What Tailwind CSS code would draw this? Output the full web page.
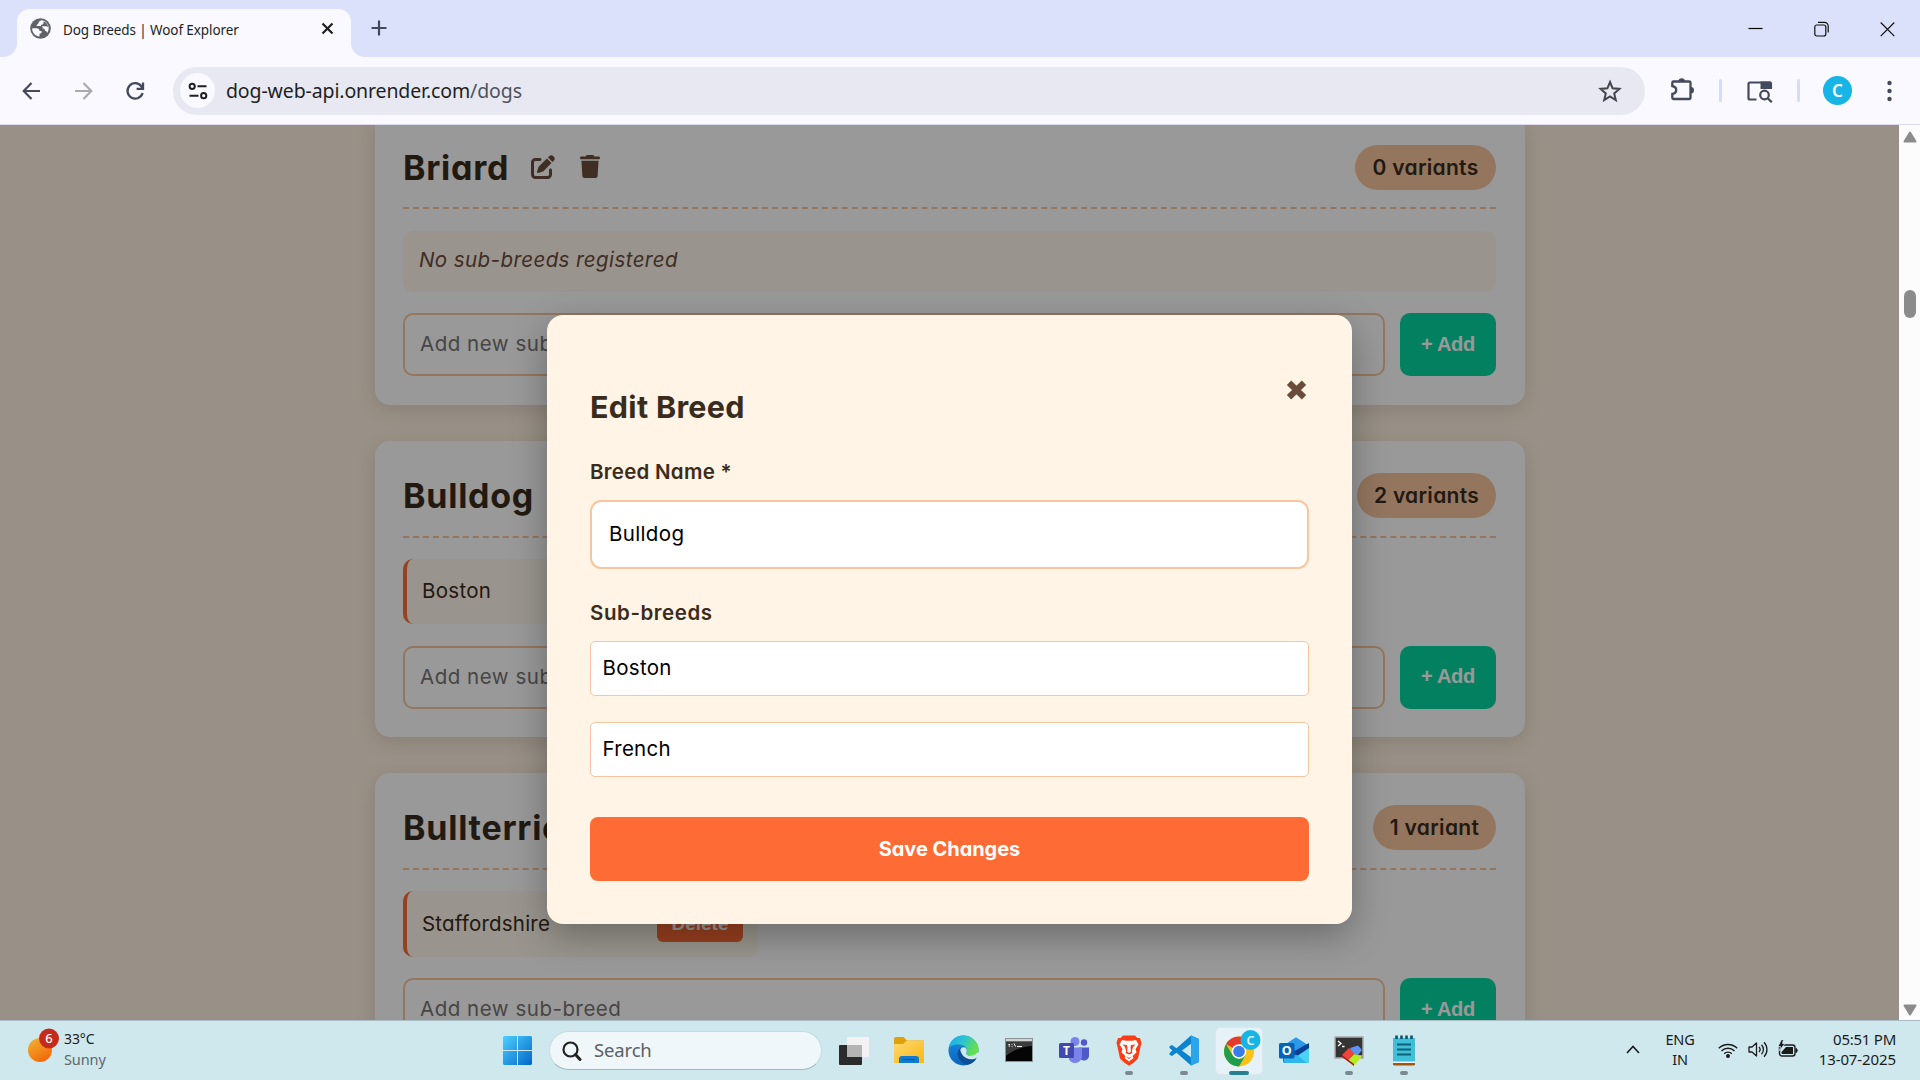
<!DOCTYPE html>
<html lang="en">
<head>
<meta charset="utf-8">
<title>Dog Breeds | Woof Explorer</title>
<script src="https://cdn.jsdelivr.net/npm/@tailwindcss/browser@4"></script>
</head>
<body class="w-[1920px] h-[1080px] overflow-hidden flex flex-col bg-[#faf9ff] font-['Noto_Sans',sans-serif] text-[#1f1f1f]">

<!-- Tab strip -->
<header class="h-[57px] shrink-0 bg-[#dce1fb] flex items-end">
  <svg class="ml-[3px] w-[14px] h-[14px] shrink-0" viewBox="0 0 14 14"><path d="M14 0V14H0C8 14 14 8 14 0Z" fill="#faf9ff"/></svg>
  <div class="w-[334px] h-[48px] bg-[#faf9ff] rounded-t-[13px] flex items-center pb-[9px] pl-[13px] pr-[17px]">
    <svg class="w-[21px] h-[21px]" viewBox="0 0 21 21"><circle cx="10.5" cy="10.5" r="10.3" fill="#5f6368"/><path d="M2.200 10.200H6.500C8.500 10.200 9.500 11.500 9.500 13H11.500C12 14.500 11 15.800 9.500 15.800V18.600C5.500 18.200 2 14.800 2.200 10.200Z M11.500 2.300C10 3.200 8.500 3.200 8.500 5C8.500 6.500 6.500 6 6.500 8H11.500C12.500 8 12.800 9 12.500 10.500C14 10.500 15 11 15 12.800C16.500 12.800 17 14 17.200 15C20.500 10.500 18.500 3 11.500 2.300Z" fill="#faf9ff"/><path d="M13.500 3.500V5.200C13.500 6.500 12 6.700 11 6.700V8.300H16.500L18.300 9C18 6.500 16 4.300 13.500 3.500Z" fill="#5f6368"/></svg>
    <span class="ml-3 mt-[2px] flex-1 text-[13.5px] tracking-[-0.1px] leading-5 whitespace-nowrap">Dog Breeds | Woof Explorer</span>
    <svg class="w-[13px] h-[13px]" viewBox="0 0 13 13"><path d="M1.500 1.500l10 10m0-10l-10 10" stroke="#1f1f1f" stroke-width="2.200"/></svg>
  </div>
  <svg class="w-[14px] h-[14px] shrink-0" viewBox="0 0 14 14"><path d="M0 0V14H14C6 14 0 8 0 0Z" fill="#faf9ff"/></svg>
  <svg class="ml-[6px] mb-[21px] w-[16px] h-[16px]" viewBox="0 0 16 16"><path d="M8 .5v15M.5 8h15" stroke="#434a5e" stroke-width="2.200"/></svg>
  <div class="ml-auto mb-[20px] mr-[25px] flex items-center gap-[51px]">
    <svg class="w-[15px] h-[16px]" viewBox="0 0 15 16"><path d="M.5 7.500h14" stroke="#000" stroke-width="1.200"/></svg>
    <svg class="w-[15px] h-[16px]" viewBox="0 0 15 16" fill="none" stroke="#111" stroke-width="1.200"><rect x=".8" y="4" width="11" height="11" rx="2"/><path d="M4 1.300h6.500a3.700 3.700 0 0 1 3.700 3.700V11.500"/></svg>
    <svg class="w-[15px] h-[16px]" viewBox="0 0 15 16"><path d="M.7 1.500l13.600 13.600m0-13.600L.7 15.100" stroke="#111" stroke-width="1.200"/></svg>
  </div>
</header>

<!-- Toolbar -->
<div class="h-[68px] shrink-0 border-b border-[#dcdcee] flex items-center">
  <svg class="ml-[21px] w-5 h-5" viewBox="0 0 20 20" fill="none" stroke="#434a5e" stroke-width="2.200"><path d="M19 10H3M10.500 2L2.700 10l7.800 8"/></svg>
  <svg class="ml-[33px] w-5 h-5" viewBox="0 0 20 20" fill="none" stroke="#a9aab0" stroke-width="2.200"><path d="M1 10h16M9.500 2l7.800 8-7.800 8"/></svg>
  <svg class="ml-[31px] w-5 h-5" viewBox="0 0 20 20" fill="none" stroke="#434a5e" stroke-width="2.300"><path d="M17.600 12A7.700 7.700 0 1 1 16.300 5.200L17.500 7M18 1.500V7.800H11.600"/></svg>
  <div class="ml-[28px] w-[1472px] h-[48px] rounded-full bg-[#e7e8f2] flex items-center pl-[7px] pr-[23px]">
    <div class="w-[35px] h-[35px] rounded-full bg-[#faf9ff] flex items-center justify-center">
      <svg class="w-5 h-5" viewBox="0 0 20 20" fill="none" stroke="#1f1f1f" stroke-width="2"><circle cx="4.200" cy="5.300" r="2.600"/><path d="M9.500 5.300H18.500M1.500 14.700H10.500"/><circle cx="15.700" cy="14.700" r="2.600"/></svg>
    </div>
    <span class="ml-[11px] text-[19.5px] tracking-[-0.12px] flex-1">dog-web-api.onrender.com<span class="text-[#50535c]">/dogs</span></span>
    <svg class="w-6 h-6" viewBox="0 0 24 24" fill="none" stroke="#45464c" stroke-width="2"><path d="M12 3l2.600 6.300 6.800.6-5.200 4.500 1.600 6.700L12 17.500 6.200 21.100l1.600-6.700L2.600 9.900l6.800-.6z"/></svg>
  </div>
  <svg class="ml-[25px] w-[25px] h-[25px] -mt-[2px]" viewBox="0 0 25 25" fill="none" stroke="#434a5e" stroke-width="2.300"><path d="M3.500 4.500H19a1.500 1.500 0 0 1 1.500 1.500V20.500A1.500 1.500 0 0 1 19 22H3.500A1.200 1.200 0 0 1 2.300 20.800V17C7.500 16 7.500 10 2.300 9V5.700A1.200 1.200 0 0 1 3.500 4.500Z"/><path d="M8.500 4.500a3.200 3.200 0 0 1 6.400 0zM20.800 10a3.200 3.200 0 0 1 0 6.400z" fill="#434a5e" stroke="none"/></svg>
  <div class="ml-[24px] w-[3px] h-[23px] rounded-full bg-[#d5dcfb]"></div>
  <svg class="ml-[25px] w-[26px] h-[24px]" viewBox="0 0 26 24" fill="none" stroke="#434a5e" stroke-width="2.200"><path d="M9.500 20.500H3A1.500 1.500 0 0 1 1.500 19V5A1.500 1.500 0 0 1 3 3.500H23A1.500 1.500 0 0 1 24 5V9"/><path d="M13.500 2.500H23a2 2 0 0 1 2 2V10H13.500z" fill="#434a5e" stroke="none"/><circle cx="17.500" cy="16" r="4.300"/><path d="M20.500 19l4.300 4.300"/></svg>
  <div class="ml-[24px] w-[3px] h-[23px] rounded-full bg-[#d5dcfb]"></div>
  <div class="ml-[23px] w-[29px] h-[29px] rounded-full bg-[#17b5e6] text-white text-[17px] font-semibold flex items-center justify-center leading-none">C</div>
  <svg class="ml-[35px] w-[6px] h-[22px]" viewBox="0 0 6 22" fill="#434a5e"><circle cx="2.500" cy="3" r="2.200"/><circle cx="2.500" cy="11" r="2.200"/><circle cx="2.500" cy="19" r="2.200"/></svg>
</div>

<!-- Page viewport -->
<div class="h-[895px] shrink-0 flex">
  <main class="relative w-[1899px] h-full overflow-hidden bg-[#fff2e1] font-['Inter','Noto_Sans',sans-serif] [font-feature-settings:'cv11'] text-[20.5px] text-[#3a2c1c]">
    <div class="w-[1150px] ml-[375px] -mt-3 flex flex-col gap-[36px]">

      <section class="bg-white rounded-[15px] pl-[28px] pr-[29px] pt-[32px] pb-[29px] shadow-[0_5px_19px_rgba(58,44,28,0.15)]">
        <div class="h-[64px] border-b-2 border-dashed border-[#f7c59f] flex items-start">
          <div class="h-[45px] flex items-center flex-1">
            <h2 class="w-[128px] text-[34px] font-bold tracking-[0.75px]">Briard</h2>
            <svg class="w-6 h-6 -mt-[2px]" viewBox="0 0 512 512" fill="#6b4c3b"><path d="M471.600 21.700c-21.900-21.900-57.300-21.900-79.200 0L362.300 51.700l97.900 97.900 30.100-30.100c21.900-21.900 21.900-57.300 0-79.200L471.600 21.700zm-299.200 220c-6.100 6.100-10.800 13.600-13.500 21.900l-29.600 88.800c-2.900 8.600-.6 18.100 5.800 24.600s15.900 8.700 24.600 5.800l88.800-29.600c8.200-2.700 15.700-7.400 21.900-13.500L437.700 172.300 339.700 74.300 172.400 241.700zM96 64C43 64 0 107 0 160V416c0 53 43 96 96 96H352c53 0 96-43 96-96V320c0-17.700-14.300-32-32-32s-32 14.300-32 32v96c0 17.700-14.300 32-32 32H96c-17.700 0-32-14.300-32-32V160c0-17.700 14.300-32 32-32h96c17.700 0 32-14.300 32-32s-14.300-32-32-32H96z"/></svg>
            <svg class="ml-[25px] w-[20px] h-[23px] -mt-[2px]" viewBox="0 0 448 512" fill="#6b4c3b"><path d="M135.200 17.700L128 32H32C14.300 32 0 46.300 0 64S14.300 96 32 96H416c17.700 0 32-14.300 32-32s-14.300-32-32-32H320l-7.200-14.300C307.400 6.800 296.300 0 284.200 0H163.800c-12.100 0-23.200 6.800-28.600 17.700zM416 128H32L53.200 467c1.600 25.300 22.600 45 47.900 45H346.900c25.300 0 46.300-19.700 47.900-45L416 128z"/></svg>
          </div>
          <span class="w-[141px] h-[45px] rounded-full bg-[#f7c59f] text-[21px] font-semibold tracking-[0.3px] flex items-center justify-center">0 variants</span>
        </div>
        <p class="mt-[22px] h-[61px] rounded-[10px] bg-[#fff8ed] px-4 pb-[2px] flex items-center italic tracking-[0.42px] text-[#6b4c3b]">No sub-breeds registered</p>
        <div class="mt-[21px] h-[63px] flex gap-[15px]">
          <div class="w-[982px] rounded-[10px] border-2 border-[#f7c59f] px-[15px] flex items-center text-[#757575] tracking-[0.52px]">Add new sub-breed</div>
          <div class="w-[96px] rounded-[10px] bg-[#06d6a0] text-white text-[20px] font-['Liberation_Sans',sans-serif] font-bold tracking-[-0.3px] pb-[2px] flex items-center justify-center">+ Add</div>
        </div>
      </section>

      <section class="bg-white rounded-[15px] pl-[28px] pr-[29px] pt-[32px] pb-[28px] shadow-[0_5px_19px_rgba(58,44,28,0.15)]">
        <div class="h-[65px] border-b-2 border-dashed border-[#f7c59f] flex items-start justify-between">
          <h2 class="h-[45px] flex items-center text-[34px] font-bold tracking-[0.75px]">Bulldog</h2>
          <span class="w-[139px] h-[45px] rounded-full bg-[#f7c59f] text-[21px] font-semibold tracking-[0.3px] flex items-center justify-center">2 variants</span>
        </div>
        <div class="mt-[21px] w-[355px] h-[65px] rounded-[10px] border-l-4 border-[#ff6b35] bg-[#fff8ed] pl-[15px] flex items-center tracking-[0.3px]">Boston</div>
        <div class="mt-[22px] h-[63px] flex gap-[15px]">
          <div class="w-[982px] rounded-[10px] border-2 border-[#f7c59f] px-[15px] pb-px flex items-center text-[#757575] tracking-[0.52px]">Add new sub-breed</div>
          <div class="w-[96px] rounded-[10px] bg-[#06d6a0] text-white text-[20px] font-['Liberation_Sans',sans-serif] font-bold tracking-[-0.3px] pb-[3px] flex items-center justify-center">+ Add</div>
        </div>
      </section>

      <section class="bg-white rounded-[15px] pl-[28px] pr-[29px] pt-[32px] pb-[28px] shadow-[0_5px_19px_rgba(58,44,28,0.15)]">
        <div class="h-[65px] border-b-2 border-dashed border-[#f7c59f] flex items-start justify-between">
          <h2 class="h-[45px] flex items-center text-[34px] font-bold tracking-[0.75px]">Bullterrier</h2>
          <span class="w-[123px] h-[45px] rounded-full bg-[#f7c59f] text-[21px] font-semibold tracking-[0.3px] flex items-center justify-center">1 variant</span>
        </div>
        <div class="mt-[21px] w-[355px] h-[66px] rounded-[10px] border-l-4 border-[#ff6b35] bg-[#fff8ed] pl-[15px] pr-[15px] flex items-center justify-between tracking-[0.2px]">Staffordshire
          <span class="w-[86px] h-[36px] rounded-md bg-[#ff6b35] text-white text-[19px] tracking-normal font-['Liberation_Sans',sans-serif] font-bold flex items-center justify-center">Delete</span>
        </div>
        <div class="mt-[21px] h-[63px] flex gap-[15px]">
          <div class="w-[982px] rounded-[10px] border-2 border-[#f7c59f] px-[15px] flex items-center text-[#757575] tracking-[0.52px]">Add new sub-breed</div>
          <div class="w-[96px] rounded-[10px] bg-[#06d6a0] text-white text-[20px] font-['Liberation_Sans',sans-serif] font-bold tracking-[-0.3px] pb-[2px] flex items-center justify-center">+ Add</div>
        </div>
      </section>
    </div>

    <!-- Edit dialog -->
    <div class="absolute inset-0 bg-black/40 flex justify-center items-start pt-[190px]">
      <form class="w-[805px] h-[609px] rounded-[16px] bg-[#fff4e5] pl-[43px] pr-[43px] pt-[65px] shadow-[0_12px_37px_rgba(0,0,0,0.3)] text-black">
        <div class="flex justify-between">
          <h2 class="mt-1 h-[45px] flex items-center text-[30.5px] font-bold tracking-[0.3px] text-[#3a2c1c]">Edit Breed</h2>
          <svg class="w-[21px] h-[20px] mr-[2px]" viewBox="0 0 21 20"><path d="M3 2.800l15 14.400M18 2.800L3 17.200" stroke="#6b4c3b" stroke-width="6.200"/></svg>
        </div>
        <label class="mt-[28px] h-[30px] flex items-center font-semibold tracking-[0.27px] text-[#3a2c1c]">Breed Name *</label>
        <div class="mt-[13px] h-[69px] rounded-[11px] border-2 border-[#f7c59f] bg-white pl-[17px] pb-px flex items-center tracking-[0.35px]">Bulldog</div>
        <label class="mt-[29px] h-[30px] flex items-center font-semibold tracking-[0.57px] text-[#3a2c1c]">Sub-breeds</label>
        <div class="mt-[13px] h-[55px] rounded-[5px] border border-[#f7c59f] bg-white pl-[11.5px] flex items-center tracking-[0.3px]">Boston</div>
        <div class="mt-[26px] h-[55px] rounded-[5px] border border-[#f7c59f] bg-white pl-[11.5px] pb-px flex items-center tracking-[0.25px]">French</div>
        <div class="mt-[40px] h-[64px] rounded-[8px] bg-[#ff6b35] text-white text-[20px] font-bold tracking-[-0.05px] pb-px flex items-center justify-center">Save Changes</div>
      </form>
    </div>
  </main>
  <!-- Scrollbar -->
  <div class="w-[21px] h-full bg-[#fcfcfc] flex flex-col items-center">
    <svg class="mt-[6px] w-[14px] h-[12px] shrink-0" viewBox="0 0 14 12"><path d="M7 1.500L12.500 10.500H1.500Z" fill="#8b8b8b" stroke="#8b8b8b" stroke-width="2" stroke-linejoin="round"/></svg>
    <div class="mt-[147px] w-[12px] h-[28px] rounded-full bg-[#8b8b8b]"></div>
    <svg class="mt-auto mb-[4px] w-[14px] h-[12px]" viewBox="0 0 14 12"><path d="M7 10.500L12.500 1.500H1.500Z" fill="#8b8b8b" stroke="#8b8b8b" stroke-width="2" stroke-linejoin="round"/></svg>
  </div>
</div>

<!-- Taskbar -->
<footer class="h-[60px] shrink-0 bg-[#cfe8ee] border-t border-[#a9bcc4] flex items-center text-[15px] text-[#1b1b1b]">
  <svg class="ml-[27px] w-[34px] h-[36px] -mt-[10px]" viewBox="0 0 34 36"><defs><linearGradient id="sun" x1="0" y1="0" x2=".6" y2="1"><stop offset="0" stop-color="#f0b72f"/><stop offset="1" stop-color="#f3690c"/></linearGradient></defs><circle cx="13" cy="22" r="12" fill="url(#sun)"/><circle cx="22" cy="10.500" r="10" fill="#c42b1c"/><text x="22" y="15.200" text-anchor="middle" font-size="13" font-family="Noto Sans" font-weight="500" fill="#fff">6</text></svg>
  <div class="ml-[3px] w-[61px] leading-5 flex flex-col -mt-[3px]"><span class="text-[14px] tracking-[-0.1px]">33°C</span><span class="text-[14.5px] tracking-[-0.1px] text-[#5d696d]">Sunny</span></div>

  <svg class="ml-[378px] w-[29px] h-[29px]" viewBox="0 0 29 29"><defs><linearGradient id="win" x1="0" y1="0" x2="1" y2="1"><stop offset="0" stop-color="#4fd0ff"/><stop offset="1" stop-color="#0067c8"/></linearGradient></defs><path d="M1 0H14V14H0V1zM15 0H28L29 1V14H15zM0 15H14V29H1L0 28zM15 15H29V28L28 29H15z" fill="url(#win)"/></svg>
  <div class="ml-[17px] w-[273px] h-[39px] rounded-full bg-[#f0f7fa] border border-[#c3dbe2] border-b-[#9fb9c1] flex items-center pl-[12px]">
    <svg class="w-[20px] h-[20px]" viewBox="0 0 20 20" fill="none" stroke="#222"><circle cx="8.500" cy="8.500" r="7" stroke-width="2.200"/><path d="M13.500 13.500l4.500 5" stroke-width="3" stroke-linecap="round"/></svg>
    <span class="ml-[12px] -mt-[2px] text-[18.5px] text-[#5c6165] tracking-[-0.15px]">Search</span>
  </div>

  <nav class="ml-[4px] grid grid-cols-[repeat(11,55px)] h-full text-center">
    <div class="flex items-center justify-center"><svg class="w-[30px] h-[28px]" viewBox="0 0 30 28"><rect y="8" width="23" height="20" rx="1" fill="#2b2b2b"/><rect x="8" width="22" height="20" rx="1" fill="#f2f2f2"/><path d="M8 8H23V20H8z" fill="#b4b4b4"/></svg></div>
    <div class="flex items-center justify-center"><svg class="w-[30px] h-[27px]" viewBox="0 0 30 27"><defs><linearGradient id="fold" x1="0" y1="0" x2="1" y2="1"><stop offset="0" stop-color="#ffd970"/><stop offset="1" stop-color="#fbb614"/></linearGradient></defs><path d="M0 2A2 2 0 0 1 2 0H9.500L13 3.500H29A1 1 0 0 1 30 4.500V10H0z" fill="#dfa00d"/><path d="M0 7H9L13 3.500H30V26H0z" fill="url(#fold)"/><path d="M5 26V22A3 3 0 0 1 8 19H22A3 3 0 0 1 25 22V26z" fill="#0f7bd0"/><path d="M9 22.500H21" stroke="#0a4f94"/></svg></div>
    <div class="flex items-center justify-center"><svg class="w-[31px] h-[31px]" viewBox="0 0 31 31"><defs><linearGradient id="e1" x1="0" y1="0" x2="1" y2=".4"><stop offset="0" stop-color="#1ca7ea"/><stop offset=".5" stop-color="#2bc3d2"/><stop offset="1" stop-color="#66e04a"/></linearGradient><linearGradient id="e2" x1="0" y1="0" x2="0" y2="1"><stop offset="0" stop-color="#1a8fe0"/><stop offset="1" stop-color="#0a63c0"/></linearGradient></defs><circle cx="15.500" cy="15.500" r="15" fill="url(#e2)"/><path d="M.8 13C2 5 8 .5 15.500 .5C24 .5 30.500 7 30.500 14C30.500 18.500 27.500 21 23.500 21C20 21 18 20 18.500 18.500C20 16.500 19 10 11.500 9.500C6 9 2 11 .8 13Z" fill="url(#e1)"/><path d="M12.500 13C7 16 9 27 19 29.800C23.500 29 27 26.500 28.500 23C25 25 20 24.500 17.500 22.500C14 20 14 16 15.500 14z" fill="#0d4f97"/><path d="M12.500 14C14.500 11 18.500 12 18.800 15.500C19 17.500 17.800 18.500 18.500 19.500C20.500 21.500 26 21.500 29.500 17.500L30.900 17.500C30.500 20 29.500 22 28.500 23C24 25.500 17 24 14.500 20C13 17.500 12 16 12.500 14Z" fill="#cfe8ee"/></svg></div>
    <div class="flex items-center justify-center"><svg class="w-[28px] h-[24px] -mt-px" viewBox="0 0 28 24"><rect x=".5" y=".5" width="27" height="23" fill="#050505" stroke="#8d9193"/><path d="M1 1h26v2.500H1z" fill="#d0d3d4"/><path d="M1 4H27V8C16 9 8 12 1 18z" fill="#3c3c3c"/><path d="M3.500 6.500h1.500M3.500 8h1.500M7 6v.8M7 8v.8M9 5.500l1.500 3M12 8.500h5" stroke="#fff" stroke-width="1"/></svg></div>
    <div class="flex items-center justify-center"><svg class="w-[30px] h-[27px]" viewBox="0 0 30 27"><circle cx="16" cy="4.500" r="4.500" fill="#7b83eb"/><circle cx="25" cy="5.500" r="3.200" fill="#5059c9"/><path d="M20 10.500H30V18.500a5 5 0 0 1-9 3z" fill="#5059c9"/><path d="M10 10.500H23V19.500a7 7 0 0 1-13 3z" fill="#7b83eb"/><rect y="6" width="15" height="15" rx="1.500" fill="#4148b0"/><text x="7.500" y="18" font-size="12" font-weight="700" font-family="Noto Sans" fill="#fff" text-anchor="middle">T</text></svg></div>
    <div class="relative flex items-center justify-center"><svg class="w-[26px] h-[31px]" viewBox="0 0 26 31"><path d="M7 .5H19L21.500 3L24 3L25.500 8L24.800 10.500L22 23.500C19 27 16 29 13 30.700C10 29 7 27 4 23.500L1.200 10.500L.5 8L2 3L4.500 3z" fill="#fb3d15"/><path d="M6 5L10 5.800H16L20 5L22.500 9.500L19.500 14L20.500 17.500L16.500 21L17.500 23L13 26.500L8.500 23L9.500 21L5.500 17.500L6.500 14L3.500 9.500z" fill="#fff"/><path d="M6.500 9.500L11 10L11.500 12.500L11 16.500L13 18L15 16.500L14.500 12.500L15 10L19.500 9.500L17 12L15.800 16.500L16.500 18L13 19.500L9.500 18L10.200 16.500L9 12zM10 21.500L13 22.800L16 21.500L13 24z" fill="#fb3d15"/></svg><i class="absolute bottom-[5px] w-[8px] h-[4px] rounded-full bg-[#7a8a8f]"></i></div>
    <div class="relative flex items-center justify-center"><svg class="w-[30px] h-[31px]" viewBox="0 0 30 31"><path d="M22 .5L30 4V27L22 30.500L7.500 17.700L3 21L.5 19.800V18L3.500 15.500L.5 13V11.200L3 10L7.500 13.300z M22 8.800L13 15.500L22 22.200z" fill="#0a84cf" fill-rule="evenodd"/><path d="M22 .5L30 4V27L22 30.500z" fill="#2aa5ee"/></svg><i class="absolute bottom-[5px] w-[8px] h-[4px] rounded-full bg-[#7a8a8f]"></i></div>
    <div class="relative flex items-center justify-center"><div class="w-[48px] h-[48px] mt-px rounded-[5px] bg-[#e6f2f7] border border-[#dbe7ec] flex items-center justify-center"><svg class="w-[40px] h-[40px] ml-[6px] -mt-[5px]" viewBox="0 0 40 40"><circle cx="17" cy="22.500" r="15" fill="#fbc116"/><path d="M17 22.500L4 15A15 15 0 0 1 30 15H17z" fill="#e33b2e"/><path d="M4 15L10.500 26.300L17 30L13.500 37A15 15 0 0 1 4 15z" fill="#1f9d4d"/><path d="M10.500 26.300L17 30L23.500 26.300L17 37.500A15 15 0 0 1 13.500 37z" fill="#1f9d4d"/><circle cx="17" cy="22.500" r="7.300" fill="#fff"/><circle cx="17" cy="22.500" r="5.800" fill="#3a7cec"/><circle cx="28.500" cy="11" r="10" fill="#17b5e6"/><text x="28.500" y="15.500" font-size="12.500" font-weight="600" font-family="Noto Sans" fill="#e3f7ff" text-anchor="middle">C</text></svg></div><i class="absolute bottom-[5px] w-[20px] h-[4px] rounded-full bg-[#27808f]"></i></div>
    <div class="flex items-center justify-center"><svg class="w-[30px] h-[27px]" viewBox="0 0 30 27"><path d="M4 9L17 .5L30 9V24A2 2 0 0 1 28 26H6A2 2 0 0 1 4 24z" fill="#1576d3"/><path d="M17 .5L27 7L17 13.500L7 7z" fill="#2b9bea"/><path d="M14 15L30 6V14L19 20z" fill="#0a3f94"/><path d="M30 11V24A2 2 0 0 1 28 26H8z" fill="#4bd3f6"/><path d="M5 20L18 18L28 26H7A2 2 0 0 1 5 24z" fill="#2eb7ee"/><rect y="6" width="15.500" height="15.500" rx="1.500" fill="#0863b5"/><text x="7.700" y="18.200" font-size="12.500" font-weight="700" font-family="Noto Sans" fill="#fff" text-anchor="middle">O</text></svg></div>
    <div class="relative flex items-center justify-center"><svg class="ml-px w-[31px] h-[30px]" viewBox="0 0 31 30"><rect x="1" y="1" width="28" height="21" fill="#333" stroke="#a9aaac" stroke-width="1.500"/><path d="M4 5l3 2.500L4 10M8 10.500h2.500" stroke="#fff" stroke-width="1.300" fill="none"/><path d="M8 19L15 12L18 14L20 18L14 25z" fill="#f0453c"/><path d="M16 12L24 9.500L28 14L24 19L20 18z" fill="#5d93f5"/><path d="M15 24L20 18L24 19L29 19.500L20 29.500z" fill="#b7ea20"/><path d="M8 19L20 28V30L8 21z" fill="#a81e1e"/></svg><i class="absolute bottom-[5px] w-[8px] h-[4px] rounded-full bg-[#7a8a8f]"></i></div>
    <div class="relative flex items-center justify-center"><svg class="w-[22px] h-[31px]" viewBox="0 0 22 31"><path d="M0 3H22V27H0z" fill="#3fbfd8"/><path d="M0 26.500H22V28H0z" fill="#f5f5f5"/><path d="M0 28H22V29.500L21 30.500H1L0 29.500z" fill="#a0560e"/><path d="M4 9.500H18M4 14.500H18M4 19.500H18" stroke="#0f6079" stroke-width="2"/><path d="M3.500 .5v3.500M8.500 .5v3.500M13.500 .5v3.500M18.500 .5v3.500" stroke="#0f4f66" stroke-width="2.600"/></svg><i class="absolute bottom-[5px] w-[8px] h-[4px] rounded-full bg-[#7a8a8f]"></i></div>
  </nav>

  <svg class="ml-[195px] -mt-[2px] w-[14px] h-[9px]" viewBox="0 0 14 9"><path d="M1 8l6-6.500L13 8" fill="none" stroke="#1b1b1b" stroke-width="1.600"/></svg>
  <div class="ml-[25px] w-[30px] leading-5 -mt-[3px] text-center flex flex-col text-[14.5px] tracking-[-0.2px]"><span>ENG</span><span>IN</span></div>
  <svg class="ml-[23px] -mt-[2px] w-[20px] h-[16px]" viewBox="0 0 20 16" fill="none" stroke="#1b1b1b" stroke-width="1.400"><path d="M.8 6.300a13 13 0 0 1 18.400 0M3.500 9a9.200 9.200 0 0 1 13 0M6.200 11.700a5.400 5.400 0 0 1 7.600 0"/><circle cx="10" cy="14" r="1.300" fill="#1b1b1b"/></svg>
  <svg class="ml-[10px] -mt-[2px] w-[20px] h-[17px]" viewBox="0 0 20 17" fill="none" stroke="#1b1b1b" stroke-width="1.300"><path d="M1 6H4L8.500 2V15L4 11H1z" stroke-linejoin="round"/><path d="M11 6a3.700 3.700 0 0 1 0 5M13.500 3.700a7 7 0 0 1 0 9.600M16 1.200a10.500 10.500 0 0 1 0 14.600"/></svg>
  <svg class="ml-[10px] w-[20px] h-[17px] -mt-[5px]" viewBox="0 0 20 17"><rect x="1.500" y="5" width="15.500" height="11" rx="2.500" fill="none" stroke="#1b1b1b" stroke-width="1.400"/><path d="M3.500 13.500V12L8 7H15V14H4z" fill="#1b1b1b"/><path d="M18 8.500a2.200 2.200 0 0 1 0 4z" fill="#1b1b1b" stroke="#1b1b1b"/><path d="M3.500 -.5L0 6.500H2.500L1.500 10.500L7 3.500H4.500L5.500 -.5z" fill="#1b1b1b" stroke="#cfe8ee" stroke-width=".8"/></svg>
  <div class="ml-auto mr-[24px] -mt-[4px] leading-5 text-right flex flex-col whitespace-nowrap"><span class="tracking-[-0.25px]">05:51 PM</span><span class="tracking-[-0.1px]">13-07-2025</span></div>
</footer>
</body>
</html>
